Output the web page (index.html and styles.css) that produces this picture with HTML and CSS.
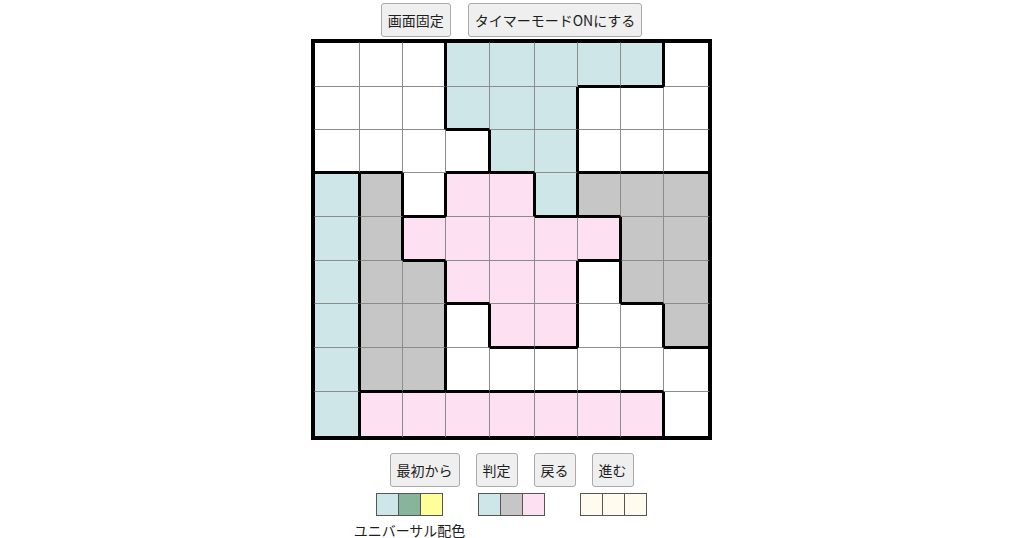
FILE: index.html
```html
<!DOCTYPE html>
<html lang="ja">
<head>
<meta charset="utf-8">
<title>パズル</title>
<link rel="stylesheet" href="styles.css">
</head>
<body>
<main class="page">
  <div class="toolbar toolbar-top">
    <button class="btn">画面固定</button>
    <button class="btn">タイマーモードONにする</button>
  </div>

  <div class="board">
    <!-- row 0 -->
    <div class="c w kl kt"></div>
    <div class="c w kt"></div>
    <div class="c w kt kr"></div>
    <div class="c bl kl kt"></div>
    <div class="c bl kt"></div>
    <div class="c bl kt"></div>
    <div class="c bl kt kb"></div>
    <div class="c bl kt kr kb"></div>
    <div class="c w kl kt kr"></div>
    <!-- row 1 -->
    <div class="c w kl"></div>
    <div class="c w"></div>
    <div class="c w kr"></div>
    <div class="c bl kl kb"></div>
    <div class="c bl"></div>
    <div class="c bl kr"></div>
    <div class="c w kl kt"></div>
    <div class="c w kt"></div>
    <div class="c w kr"></div>
    <!-- row 2 -->
    <div class="c w kl kb"></div>
    <div class="c w kb"></div>
    <div class="c w"></div>
    <div class="c w kt kr kb"></div>
    <div class="c bl kl kb"></div>
    <div class="c bl kr"></div>
    <div class="c w kl kb"></div>
    <div class="c w kb"></div>
    <div class="c w kr kb"></div>
    <!-- row 3 -->
    <div class="c bl kl kt kr"></div>
    <div class="c gy kl kt kr"></div>
    <div class="c w kl kr kb"></div>
    <div class="c pk kl kt"></div>
    <div class="c pk kt kr"></div>
    <div class="c bl kl kr kb"></div>
    <div class="c gy kl kt kb"></div>
    <div class="c gy kt"></div>
    <div class="c gy kt kr"></div>
    <!-- row 4 -->
    <div class="c bl kl kr"></div>
    <div class="c gy kl kr"></div>
    <div class="c pk kl kt kb"></div>
    <div class="c pk"></div>
    <div class="c pk"></div>
    <div class="c pk kt"></div>
    <div class="c pk kt kr kb"></div>
    <div class="c gy kl"></div>
    <div class="c gy kr"></div>
    <!-- row 5 -->
    <div class="c bl kl kr"></div>
    <div class="c gy kl"></div>
    <div class="c gy kt kr"></div>
    <div class="c pk kl kb"></div>
    <div class="c pk"></div>
    <div class="c pk kr"></div>
    <div class="c w kl kt kr"></div>
    <div class="c gy kl kb"></div>
    <div class="c gy kr"></div>
    <!-- row 6 -->
    <div class="c bl kl kr"></div>
    <div class="c gy kl"></div>
    <div class="c gy kr"></div>
    <div class="c w kl kt kr"></div>
    <div class="c pk kl kb"></div>
    <div class="c pk kr kb"></div>
    <div class="c w kl"></div>
    <div class="c w kt kr"></div>
    <div class="c gy kl kr kb"></div>
    <!-- row 7 -->
    <div class="c bl kl kr"></div>
    <div class="c gy kl kb"></div>
    <div class="c gy kr kb"></div>
    <div class="c w kl kb"></div>
    <div class="c w kt kb"></div>
    <div class="c w kt kb"></div>
    <div class="c w kb"></div>
    <div class="c w kb"></div>
    <div class="c w kt kr"></div>
    <!-- row 8 -->
    <div class="c bl kl kr kb"></div>
    <div class="c pk kl kt kb"></div>
    <div class="c pk kt kb"></div>
    <div class="c pk kt kb"></div>
    <div class="c pk kt kb"></div>
    <div class="c pk kt kb"></div>
    <div class="c pk kt kb"></div>
    <div class="c pk kt kr kb"></div>
    <div class="c w kl kr kb"></div>
  </div>

  <div class="toolbar toolbar-bottom">
    <button class="btn">最初から</button>
    <button class="btn">判定</button>
    <button class="btn">戻る</button>
    <button class="btn">進む</button>
  </div>

  <div class="palettes">
    <div class="palette">
      <div class="swatches">
        <span class="sw sw-blue"></span>
        <span class="sw sw-green"></span>
        <span class="sw sw-yellow"></span>
      </div>
      <div class="palette-label">ユニバーサル配色</div>
    </div>
    <div class="palette">
      <div class="swatches">
        <span class="sw sw-blue"></span>
        <span class="sw sw-gray"></span>
        <span class="sw sw-pink"></span>
      </div>
    </div>
    <div class="palette">
      <div class="swatches">
        <span class="sw sw-cream"></span>
        <span class="sw sw-cream"></span>
        <span class="sw sw-cream"></span>
      </div>
    </div>
  </div>
</main>
</body>
</html>
```

FILE: styles.css
```css
html, body {
  margin: 0;
  padding: 0;
  background: #ffffff;
}

body {
  font-family: "Noto Sans CJK JP", "Noto Sans", sans-serif;
  color: #222222;
}

.page {
  width: 1023px;
  padding: 3px 1px 0 0;
  display: flex;
  flex-direction: column;
  align-items: center;
}

.toolbar {
  display: flex;
  justify-content: center;
}

.toolbar-top {
  gap: 17px;
  margin-bottom: 2px;
}

.toolbar-bottom {
  gap: 16px;
  margin-top: 13px;
  margin-bottom: 6px;
}

.btn {
  font-family: "Noto Sans CJK JP", "Noto Sans", sans-serif;
  font-size: 14px;
  line-height: 20px;
  padding: 6px 6px;
  margin: 0;
  border: 1px solid #aaaaaa;
  border-radius: 3px;
  background: #efefef;
  color: #1e1e1e;
  white-space: nowrap;
}

/* board */
.board {
  display: grid;
  grid-template-columns: 46px 43px 43px 44px 45px 43px 43px 43px 46px;
  grid-template-rows: 45px 43px 43px 44px 44px 43px 44px 44px 46px;
  border-style: solid;
  border-color: #000000;
  border-width: 3px 2px 2px 3px;
}

.c {
  box-sizing: border-box;
  border-right: 1px solid #8c8c8c;
  border-bottom: 1px solid #8c8c8c;
}

.c.kl { border-left: 1px solid #000000; }
.c.kt { border-top: 1px solid #000000; }
.c.kr { border-right: 2px solid #000000; }
.c.kb { border-bottom: 2px solid #000000; }

.w  { background: #ffffff; }
.bl { background: #cfe6e8; }
.gy { background: #c6c6c6; }
.pk { background: #fde0f1; }

/* palettes */
.palettes {
  display: flex;
  justify-content: center;
  align-items: flex-start;
}

.palette {
  width: 102px;
  display: flex;
  flex-direction: column;
  align-items: center;
}

.swatches {
  display: flex;
}

.sw {
  display: block;
  width: 21px;
  height: 21px;
  border: 1px solid #555555;
}

.sw + .sw {
  margin-left: -1px;
}

.sw-blue   { background: #cfe6e8; }
.sw-green  { background: #88b49c; }
.sw-yellow { background: #ffff99; }
.sw-gray   { background: #c6c6c6; }
.sw-pink   { background: #fde0f1; }
.sw-cream  { background: #fffbee; }

.palette-label {
  margin-top: 4px;
  font-size: 14px;
  line-height: 20px;
  white-space: nowrap;
  color: #1e1e1e;
}
```
